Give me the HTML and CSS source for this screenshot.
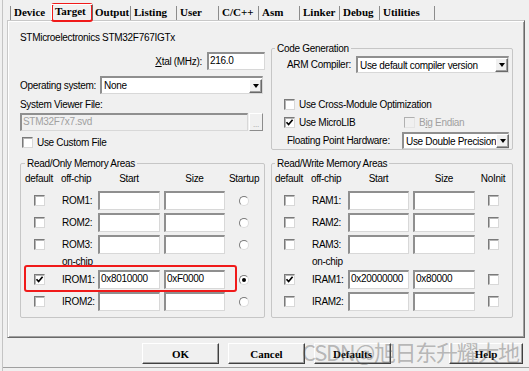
FILE: index.html
```html
<!DOCTYPE html>
<html lang="en">
<head>
  <meta charset="UTF-8" />
  <title>Options for Target</title>
  <link rel="stylesheet" href="styles.css">
</head>
<body>
  <div class="window">
    <div class="tabs">
      <span class="tab">Device</span>
      <span class="tab tab-active">Target</span>
      <span class="tab">Output</span>
      <span class="tab">Listing</span>
      <span class="tab">User</span>
      <span class="tab">C/C++</span>
      <span class="tab">Asm</span>
      <span class="tab">Linker</span>
      <span class="tab">Debug</span>
      <span class="tab">Utilities</span>
    </div>

    <div class="panel">
      <div class="top">
        <div class="target-info">
          <div class="device">STMicroelectronics STM32F767IGTx</div>
          <div class="xtal-row">
            <label><u>X</u>tal (MHz):</label>
            <span class="edit xtal">216.0</span>
          </div>
          <div class="os-row">
            <label>Operating system:</label>
            <span class="combo os"><span>None</span><span class="drop"></span></span>
          </div>
          <div class="svf-label">System Viewer File:</div>
          <div class="svf-row">
            <span class="edit edit-disabled">STM32F7x7.svd</span>
            <span class="dots">...</span>
          </div>
          <div class="check-row"><span class="cb"></span><span>Use Custom File</span></div>
        </div>

        <fieldset class="group codegen">
          <legend>Code Generation</legend>
          <div class="arm-row">
            <label>ARM Compiler:</label>
            <span class="combo arm"><span>Use default compiler version</span><span class="drop"></span></span>
          </div>
          <div class="cg-row cg-first">
            <span class="opt"><span class="cb"></span><span>Use Cross-Module Optimization</span></span>
          </div>
          <div class="cg-row cg-second">
            <span class="opt opt-wide"><span class="cb cb-on"><svg viewBox="0 0 9 9" width="9" height="9"><path d="M1.5 4.2 L3.6 6.5 L7.6 1.8" fill="none" stroke="#000" stroke-width="1.7"/></svg></span><span>Use MicroLIB</span></span>
            <span class="opt opt-disabled"><span class="cb cb-disabled"></span><span>B<u>i</u>g Endian</span></span>
          </div>
          <div class="fph-row">
            <label>Floating Point Hardware:</label>
            <span class="combo fph"><span>Use Double Precision</span><span class="drop"></span></span>
          </div>
        </fieldset>
      </div>

      <div class="mem">
        <fieldset class="group ro">
          <legend>Read/Only Memory Areas</legend>
          <div class="mem-grid">
            <span class="head">default</span><span class="head head-left">off-chip</span><span class="head">Start</span><span class="head">Size</span><span class="head">Startup</span>

            <span class="cell"><span class="cb"></span></span><span class="name">ROM1:</span><span class="edit"></span><span class="edit"></span><span class="cell"><span class="rb"></span></span>
            <span class="cell"><span class="cb"></span></span><span class="name">ROM2:</span><span class="edit"></span><span class="edit"></span><span class="cell"><span class="rb"></span></span>
            <span class="cell"><span class="cb"></span></span><span class="name">ROM3:</span><span class="edit"></span><span class="edit"></span><span class="cell"><span class="rb"></span></span>

            <span></span><span class="name on-chip">on-chip</span><span></span><span></span><span></span>

            <span class="cell"><span class="cb cb-on"><svg viewBox="0 0 9 9" width="9" height="9"><path d="M1.5 4.2 L3.6 6.5 L7.6 1.8" fill="none" stroke="#000" stroke-width="1.7"/></svg></span></span><span class="name">IROM1:</span><span class="edit">0x8010000</span><span class="edit">0xF0000</span><span class="cell"><span class="rb rb-on"></span></span>
            <span class="cell"><span class="cb"></span></span><span class="name">IROM2:</span><span class="edit"></span><span class="edit"></span><span class="cell"><span class="rb"></span></span>
          </div>
        </fieldset>

        <fieldset class="group rw">
          <legend>Read/Write Memory Areas</legend>
          <div class="mem-grid">
            <span class="head">default</span><span class="head head-left">off-chip</span><span class="head">Start</span><span class="head">Size</span><span class="head">NoInit</span>

            <span class="cell"><span class="cb"></span></span><span class="name">RAM1:</span><span class="edit"></span><span class="edit"></span><span class="cell"><span class="cb"></span></span>
            <span class="cell"><span class="cb"></span></span><span class="name">RAM2:</span><span class="edit"></span><span class="edit"></span><span class="cell"><span class="cb"></span></span>
            <span class="cell"><span class="cb"></span></span><span class="name">RAM3:</span><span class="edit"></span><span class="edit"></span><span class="cell"><span class="cb"></span></span>

            <span></span><span class="name on-chip">on-chip</span><span></span><span></span><span></span>

            <span class="cell"><span class="cb cb-on"><svg viewBox="0 0 9 9" width="9" height="9"><path d="M1.5 4.2 L3.6 6.5 L7.6 1.8" fill="none" stroke="#000" stroke-width="1.7"/></svg></span></span><span class="name">IRAM1:</span><span class="edit">0x20000000</span><span class="edit">0x80000</span><span class="cell"><span class="cb"></span></span>
            <span class="cell"><span class="cb"></span></span><span class="name">IRAM2:</span><span class="edit"></span><span class="edit"></span><span class="cell"><span class="cb"></span></span>
          </div>
        </fieldset>
      </div>
    </div>

    <div class="buttons">
      <button>OK</button>
      <button>Cancel</button>
      <button>Defaults</button>
      <button class="help">Help</button>
    </div>
  </div>

  <!-- annotations drawn over the dialog -->
  <div class="mark mark-tab"></div>
  <div class="mark mark-irom"></div>
  <div class="watermark">CSDN@旭日东升耀大地</div>
</body>
</html>
```

FILE: styles.css
```css
* {
  box-sizing: border-box;
}

body {
  margin: 0;
  width: 529px;
  height: 371px;
  overflow: hidden;
  background: #f0f0f0;
  color: #000;
  font-family: "Liberation Sans", Arial, sans-serif;
  font-size: 10px;
  letter-spacing: -0.3px;
  line-height: 13px;
}

label {
  white-space: nowrap;
}

.window {
  margin-left: 2px;
  border-left: 1px solid #c4c4c4;
  height: 371px;
}

/* tab strip */
.tabs {
  display: grid;
  grid-template-columns: 41px 42px 37px 46px 42px 40px 41px 40px 40px 56px;
  height: 20px;
  padding: 6px 0 0 7px;
  font: bold 11px/13px "Liberation Serif", serif;
  letter-spacing: 0;
}

.tab {
  border-left: 1px solid #8c8c8c;
  padding-left: 3px;
  height: 14px;
  white-space: nowrap;
}

.tab:last-child {
  border-right: 1px solid #8c8c8c;
}

.tab-active {
  margin-top: -2px;
  height: 16px;
  border-left: 1px solid #fff;
  border-top: 1px solid #fff;
  border-right: 1px solid #696969;
  position: relative;
  z-index: 1;
}

.tab-active + .tab {
  border-left: none;
  padding-left: 2px;
}

/* tab page */
.panel {
  margin-left: 4px;
  width: 518px;
  height: 318px;
  border: 1px solid;
  border-color: #c8c8c8 #696969 #696969 #c8c8c8;
  box-shadow: inset 1px 1px #fff, inset -1px -1px #a0a0a0;
  padding: 10px 11px 0 12px;
}

.top,
.mem {
  display: grid;
  grid-template-columns: 245px 242px;
  column-gap: 6px;
}

.top {
  height: 119px;
}

.mem {
  margin-top: 7px;
}

.target-info {
  display: flex;
  flex-direction: column;
}

.xtal-row {
  display: flex;
  justify-content: flex-end;
  align-items: center;
  gap: 5px;
  margin-top: 8px;
  height: 18px;
}

.os-row {
  display: flex;
  align-items: center;
  margin-top: 6px;
  height: 18px;
}

.os-row label {
  width: 80px;
}

.svf-label {
  margin-top: 4px;
}

.svf-row {
  display: flex;
  gap: 1px;
  margin-top: 2px;
  height: 18px;
  width: 243px;
}

.check-row {
  display: flex;
  align-items: center;
  gap: 4px;
  margin-top: 5px;
  padding-left: 2px;
  height: 13px;
}

/* controls */
.edit {
  display: block;
  height: 18px;
  background: #fff;
  border-style: solid;
  border-width: 2px 1px 1px 2px;
  border-color: #8f8f8f #d8d8d8 #d8d8d8 #8f8f8f;
  padding: 0 1px;
  line-height: 13px;
  white-space: nowrap;
  overflow: hidden;
}

.xtal {
  width: 58px;
}

.edit-disabled {
  flex: 1;
  background: #f0f0f0;
  color: #a0a0a0;
}

.dots {
  width: 14px;
  border: 1px solid;
  border-color: #fff #8c8c8c #8c8c8c #fff;
  color: #9a9a9a;
  font-size: 8px;
  line-height: 9px;
  text-align: center;
  padding-top: 6px;
}

.combo {
  display: flex;
  align-items: center;
  justify-content: space-between;
  height: 18px;
  background: #fff;
  border-style: solid;
  border-width: 2px 1px 1px 2px;
  border-color: #8f8f8f #d8d8d8 #d8d8d8 #8f8f8f;
  padding-left: 2px;
  white-space: nowrap;
}

.os {
  width: 163px;
}

.drop {
  display: flex;
  align-items: center;
  justify-content: center;
  flex: none;
  width: 13px;
  height: 14px;
  background: #f0f0f0;
  border: 1px solid;
  border-color: #fff #696969 #696969 #fff;
  box-shadow: inset -1px -1px #a0a0a0;
}

.drop::after {
  content: "";
  border-left: 3px solid transparent;
  border-right: 3px solid transparent;
  border-top: 4px solid #000;
}

.cb {
  display: inline-flex;
  align-items: center;
  justify-content: center;
  flex: none;
  width: 11px;
  height: 11px;
  background: #fff;
  border: 1px solid;
  border-color: #7a7a7a #d8d8d8 #d8d8d8 #7a7a7a;
  box-shadow: inset 1px 1px #b4b4b4;
}

.cb-disabled {
  background: #f0f0f0;
  border-color: #b0b0b0 #e4e4e4 #e4e4e4 #b0b0b0;
  box-shadow: none;
}

.rb {
  display: inline-block;
  position: relative;
  width: 10px;
  height: 10px;
  border-radius: 50%;
  background: #fff;
  border: 1px solid;
  border-color: #7a7a7a #dcdcdc #dcdcdc #7a7a7a;
}

.rb-on::after {
  content: "";
  position: absolute;
  left: 2px;
  top: 2px;
  width: 4px;
  height: 4px;
  border-radius: 50%;
  background: #000;
}

/* group boxes */
.group {
  margin: 0;
  min-width: 0;
  border: 1px solid #c6c6c6;
  border-radius: 2px;
  padding: 0;
}

.group legend {
  margin-left: 3px;
  padding: 0 2px;
  line-height: 13px;
}

.codegen {
  margin-top: 11px;
  align-self: start;
  padding-bottom: 0;
}

.arm-row {
  display: flex;
  align-items: center;
  margin-top: 1px;
  height: 17px;
  padding-left: 15px;
}

.arm-row label {
  width: 69px;
}

.arm {
  width: 153px;
  height: 17px;
}

.cg-row {
  display: flex;
  align-items: center;
  height: 13px;
  padding-left: 12px;
}

.cg-first {
  margin-top: 25px;
}

.cg-second {
  margin-top: 5px;
}

.opt {
  display: flex;
  align-items: center;
  gap: 4px;
  white-space: nowrap;
}

.opt-wide {
  width: 120px;
}

.opt-disabled {
  color: #a0a0a0;
}

.fph-row {
  display: flex;
  align-items: center;
  margin-top: 3px;
  height: 17px;
  padding-left: 15px;
}

.fph-row label {
  width: 115px;
}

.fph {
  width: 107px;
  height: 17px;
}

/* memory areas */
.ro {
  padding: 2px 0 6px 1px;
}

.rw {
  padding: 2px 0 6px 0;
}

.mem-grid {
  display: grid;
  grid-template-rows: 16px 19px 19px 19px 10px 19px 19px;
  column-gap: 4px;
  row-gap: 3px;
  align-items: center;
}

.ro .mem-grid {
  grid-template-columns: 34px 34px 62px 61px 30px;
}

.rw .mem-grid {
  grid-template-columns: 34px 34px 61px 62px 28px;
}

.mem-grid .edit {
  height: 19px;
}

.head {
  align-self: start;
  text-align: center;
  white-space: nowrap;
}

.head-left {
  text-align: left;
  padding-left: 1px;
}

.name {
  padding-left: 2px;
  white-space: nowrap;
}

.on-chip {
  line-height: 10px;
}

.cell {
  display: flex;
  justify-content: center;
}

/* dialog buttons */
.buttons {
  display: flex;
  gap: 9px;
  margin-top: 5px;
  padding: 0 6px 3px 139px;
  border-bottom: 1px solid #a0a0a0;
}

.buttons button {
  width: 77px;
  height: 21px;
  padding: 0;
  background: #f0f0f0;
  border: 1px solid;
  border-color: #fff #404040 #404040 #fff;
  box-shadow: inset -1px -1px #a0a0a0;
  font: bold 11px "Liberation Serif", serif;
  color: #000;
}

.buttons .help {
  margin-left: auto;
  width: 74px;
}

/* red highlight boxes and watermark */
.mark {
  position: absolute;
  border: 2px solid #f01a1a;
  border-radius: 3px;
}

.mark-tab {
  left: 51px;
  top: 3px;
  width: 42px;
  height: 19px;
}

.mark-irom {
  left: 24px;
  top: 265px;
  width: 213px;
  height: 27px;
}

.watermark {
  position: absolute;
  left: 302px;
  top: 340px;
  font: 22px/22px "Noto Sans CJK SC", sans-serif;
  letter-spacing: -1.3px;
  color: rgba(90, 90, 90, 0.4);
  white-space: nowrap;
}
```
